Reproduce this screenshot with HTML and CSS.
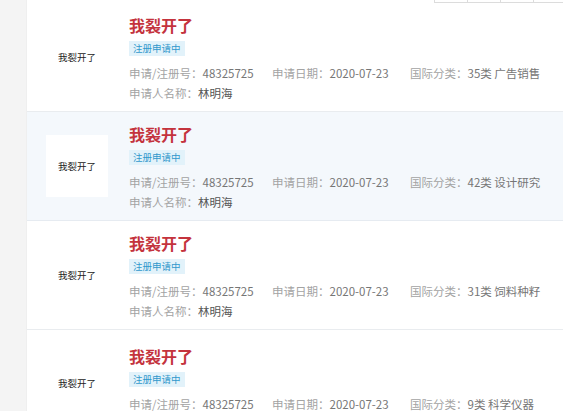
FILE: index.html
```html
<!DOCTYPE html>
<html lang="zh">
<head>
<meta charset="utf-8">
<title>商标列表</title>
<link rel="stylesheet" href="styles.css">
</head>
<body>
<div class="page">
  <aside class="side"></aside>
  <main class="main">
    <div class="topbar">
      <span class="cell"></span><span class="cell"></span><span class="cell"></span><span class="cell last"></span>
    </div>
    <ul class="list">
      <li class="row">
        <div class="logo">我裂开了</div>
        <div class="info">
          <div class="title">我裂开了</div>
          <div class="tagline"><span class="tag">注册申请中</span></div>
          <div class="meta">
            <span><span class="lbl">申请/注册号：</span><span class="val">48325725</span></span>
            <span><span class="lbl">申请日期：</span><span class="val">2020-07-23</span></span>
            <span><span class="lbl">国际分类：</span><span class="val">35类 广告销售</span></span>
          </div>
          <div class="owner"><span class="lbl">申请人名称：</span><span class="val dark">林明海</span></div>
        </div>
      </li>
      <li class="row active">
        <div class="logo">我裂开了</div>
        <div class="info">
          <div class="title">我裂开了</div>
          <div class="tagline"><span class="tag">注册申请中</span></div>
          <div class="meta">
            <span><span class="lbl">申请/注册号：</span><span class="val">48325725</span></span>
            <span><span class="lbl">申请日期：</span><span class="val">2020-07-23</span></span>
            <span><span class="lbl">国际分类：</span><span class="val">42类 设计研究</span></span>
          </div>
          <div class="owner"><span class="lbl">申请人名称：</span><span class="val dark">林明海</span></div>
        </div>
      </li>
      <li class="row">
        <div class="logo">我裂开了</div>
        <div class="info">
          <div class="title">我裂开了</div>
          <div class="tagline"><span class="tag">注册申请中</span></div>
          <div class="meta">
            <span><span class="lbl">申请/注册号：</span><span class="val">48325725</span></span>
            <span><span class="lbl">申请日期：</span><span class="val">2020-07-23</span></span>
            <span><span class="lbl">国际分类：</span><span class="val">31类 饲料种籽</span></span>
          </div>
          <div class="owner"><span class="lbl">申请人名称：</span><span class="val dark">林明海</span></div>
        </div>
      </li>
      <li class="row cut">
        <div class="logo">我裂开了</div>
        <div class="info">
          <div class="title">我裂开了</div>
          <div class="tagline"><span class="tag">注册申请中</span></div>
          <div class="meta">
            <span><span class="lbl">申请/注册号：</span><span class="val">48325725</span></span>
            <span><span class="lbl">申请日期：</span><span class="val">2020-07-23</span></span>
            <span><span class="lbl">国际分类：</span><span class="val">9类 科学仪器</span></span>
          </div>
        </div>
      </li>
    </ul>
  </main>
</div>
</body>
</html>
```
FILE: styles.css
```css
* { box-sizing: border-box; }
html, body { margin: 0; padding: 0; }
body {
  background: #fff;
  font-family: "Noto Sans CJK SC", "Noto Sans", sans-serif;
  width: 563px;
  height: 411px;
  overflow: hidden;
}
.page { display: flex; height: 411px; }
.side {
  width: 27px;
  flex: 0 0 27px;
  background: #f4f4f4;
  border-right: 1px solid #efefef;
}
.main { flex: 1; min-width: 0; }
.topbar {
  display: flex;
  justify-content: flex-end;
  height: 3px;
}
.cell {
  width: 33px;
  height: 3px;
  border-left: 1px solid #dcdcdc;
  border-bottom: 1px solid #dcdcdc;
}
.cell.last { width: 30px; }
.list { list-style: none; margin: 0; padding: 0; }
.row {
  display: flex;
  align-items: center;
  height: 109px;
  border-bottom: 1px solid #e9ecef;
  padding-left: 19px;
}
.row.cut { align-items: flex-start; padding-top: 13px; height: 82px; border-bottom: 0; }
.row.cut .logo { margin-top: 9px; }
.row.active { background: #f4f8fc; border-bottom-color: #e6ebf1; }
.logo {
  width: 62px;
  height: 62px;
  background: #fff;
  display: flex;
  align-items: center;
  justify-content: center;
  font-size: 9.5px;
  color: #222;
  flex: 0 0 62px;
}
.info { margin-left: 21px; padding-top: 3px; }
.title {
  font-size: 16px;
  font-weight: bold;
  color: #c4333d;
  line-height: 20px;
}
.tagline { margin-top: 3px; line-height: 14px; }
.tag {
  display: inline-block;
  background: #e2f2fa;
  color: #3199cc;
  font-size: 9.5px;
  line-height: 15px;
  padding: 0 4px;
}
.meta {
  display: grid;
  grid-template-columns: 143px 138px auto;
  margin-top: 7px;
  font-size: 11.5px;
  line-height: 20px;
  white-space: nowrap;
}
.owner { font-size: 11.5px; line-height: 20px; }
.lbl { color: #a3a3a3; }
.val { color: #767676; }
.val.dark { color: #555; }
```
